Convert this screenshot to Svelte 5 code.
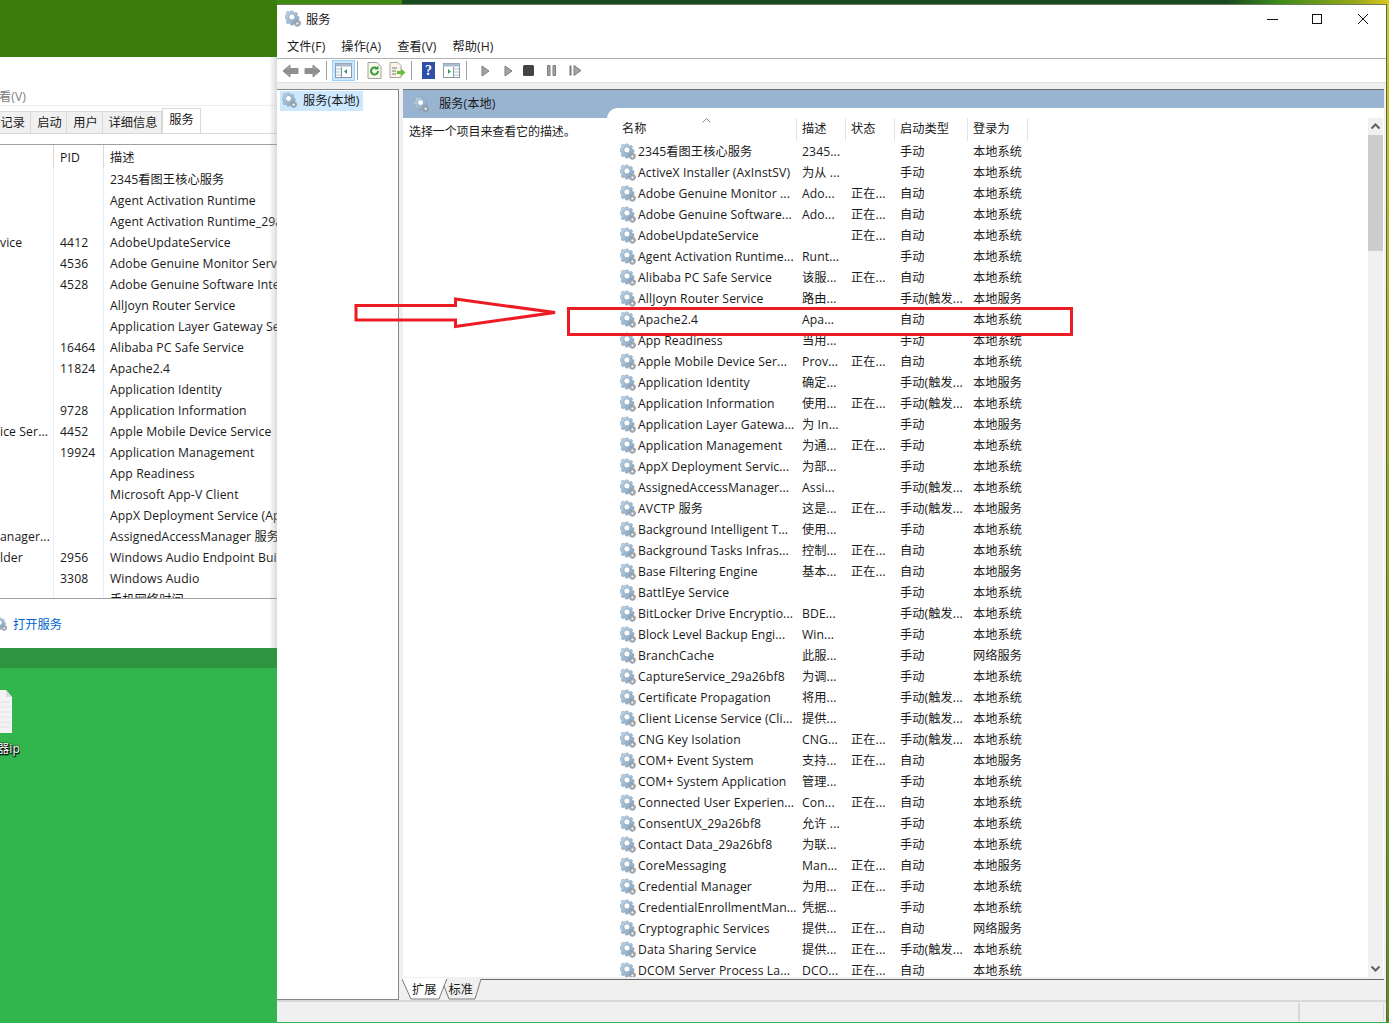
<script>
  const services = `2345看图王核心服务|2345...||手动|本地系统
ActiveX Installer (AxInstSV)|为从 ...||手动|本地系统
Adobe Genuine Monitor ...|Ado...|正在...|自动|本地系统
Adobe Genuine Software...|Ado...|正在...|自动|本地系统
AdobeUpdateService||正在...|自动|本地系统
Agent Activation Runtime...|Runt...||手动|本地系统
Alibaba PC Safe Service|该服...|正在...|自动|本地系统
AllJoyn Router Service|路由...||手动(触发...|本地服务
Apache2.4|Apa...||自动|本地系统
App Readiness|当用...||手动|本地系统
Apple Mobile Device Ser...|Prov...|正在...|自动|本地系统
Application Identity|确定...||手动(触发...|本地服务
Application Information|使用...|正在...|手动(触发...|本地系统
Application Layer Gatewa...|为 In...||手动|本地服务
Application Management|为通...|正在...|手动|本地系统
AppX Deployment Servic...|为部...||手动|本地系统
AssignedAccessManager...|Assi...||手动(触发...|本地系统
AVCTP 服务|这是...|正在...|手动(触发...|本地服务
Background Intelligent T...|使用...||手动|本地系统
Background Tasks Infras...|控制...|正在...|自动|本地系统
Base Filtering Engine|基本...|正在...|自动|本地服务
BattlEye Service|||手动|本地系统
BitLocker Drive Encryptio...|BDE...||手动(触发...|本地系统
Block Level Backup Engi...|Win...||手动|本地系统
BranchCache|此服...||手动|网络服务
CaptureService_29a26bf8|为调...||手动|本地系统
Certificate Propagation|将用...||手动(触发...|本地系统
Client License Service (Cli...|提供...||手动(触发...|本地系统
CNG Key Isolation|CNG...|正在...|手动(触发...|本地系统
COM+ Event System|支持...|正在...|自动|本地服务
COM+ System Application|管理...||手动|本地系统
Connected User Experien...|Con...|正在...|自动|本地系统
ConsentUX_29a26bf8|允许 ...||手动|本地系统
Contact Data_29a26bf8|为联...||手动|本地系统
CoreMessaging|Man...|正在...|自动|本地服务
Credential Manager|为用...|正在...|手动|本地系统
CredentialEnrollmentMan...|凭据...||手动|本地系统
Cryptographic Services|提供...|正在...|自动|网络服务
Data Sharing Service|提供...|正在...|手动(触发...|本地系统
DCOM Server Process La...|DCO...|正在...|自动|本地系统`
    .split('\n')
    .map((l) => l.split('|'));

  const procs = `||2345看图王核心服务
||Agent Activation Runtime
||Agent Activation Runtime_29a26bf8
vice|4412|AdobeUpdateService
|4536|Adobe Genuine Monitor Service
|4528|Adobe Genuine Software Integrity
||AllJoyn Router Service
||Application Layer Gateway Service
|16464|Alibaba PC Safe Service
|11824|Apache2.4
||Application Identity
|9728|Application Information
ice Ser...|4452|Apple Mobile Device Service
|19924|Application Management
||App Readiness
||Microsoft App-V Client
||AppX Deployment Service (AppXSVC)
anager...||AssignedAccessManager 服务
lder|2956|Windows Audio Endpoint Builder
|3308|Windows Audio
||手机网络时间`
    .split('\n')
    .map((l) => l.split('|'));

  const menus = ['文件(F)', '操作(A)', '查看(V)', '帮助(H)'];
  const taskTabs = ['记录', '启动', '用户', '详细信息'];
  const headers = ['名称', '描述', '状态', '启动类型', '登录为'];
</script>

<svg class="defs" width="0" height="0" aria-hidden="true">
  <defs>
    <linearGradient id="gearfill" x1="0" y1="0" x2="1" y2="1">
      <stop offset="0" stop-color="#c4d8ea" />
      <stop offset="1" stop-color="#7f9fbd" />
    </linearGradient>
    <linearGradient id="navfill" x1="0" y1="0" x2="0" y2="1">
      <stop offset="0" stop-color="#b4b4b4" />
      <stop offset=".5" stop-color="#8a8a8a" />
      <stop offset="1" stop-color="#a4a4a4" />
    </linearGradient>
    <symbol id="gear" viewBox="0 0 18 18">
      <path d="M6 1h2.600l.4 1.700 1.200.5 1.500-.9 1.800 1.800-.9 1.500.5 1.200 1.700.4v2.600l-1.700.4-.5 1.200.9 1.500-1.800 1.800-1.500-.9-1.200.5-.4 1.700H6l-.4-1.700-1.200-.5-1.500.9-1.800-1.800.9-1.500-.5-1.200L0 8.600V6l1.500-.4.5-1.200-.9-1.500L2.900 1.100l1.500.9 1.200-.5z" fill="url(#gearfill)" stroke="#7d9ab6" stroke-width=".5" />
      <circle cx="7.300" cy="7.300" r="3.300" fill="#fff" stroke="#7d9ab6" stroke-width=".8" />
      <path d="M12.300 10.500h1.600l.3 1 .8-.5 1.100 1.100-.5.8 1 .3v1.600l-1 .3.5.8-1.100 1.100-.8-.5-.3 1h-1.600l-.3-1-.8.5-1.100-1.100.5-.8-1-.3v-1.600l1-.3-.5-.8 1.100-1.100.8.5z" fill="#a0a8b0" stroke="#7c848c" stroke-width=".4" />
      <circle cx="13.100" cy="14.300" r="1.100" fill="#fff" />
    </symbol>
  </defs>
</svg>

<div class="desktop">
  <div class="topstrip"></div>

  <!-- background window: task manager -->
  <section class="taskman">
    <div class="tm-menu">看(V)</div>
    <div class="tm-tabs">
      {#each taskTabs as t}<span class="tm-tab">{t}</span>{/each}
      <span class="tm-tab active">服务</span>
    </div>
    <div class="tm-table">
      <div class="tm-row tm-head"><span></span><span>PID</span><span>描述</span></div>
      {#each procs as p}
        <div class="tm-row"><span>{p[0]}</span><span>{p[1]}</span><span>{p[2]}</span></div>
      {/each}
    </div>
    <div class="tm-foot">
      <svg class="g14" viewBox="0 0 18 18"><use href="#gear" /></svg>
      <span>打开服务</span>
    </div>
  </section>

  <!-- desktop file icon -->
  <div class="file">
    <svg width="13" height="44" viewBox="0 0 13 44">
      <path d="M-10 0H6l6 7v36H-10z" fill="#f3f3f3" />
      <path d="M6 0v7h6z" fill="#dcdcdc" />
      <path d="M0 12h10M0 17h10M0 22h10M0 27h10M0 32h10M0 37h10" stroke="#e2e2e2" />
    </svg>
    <div class="file-label"><span>服务器ip</span></div>
  </div>

  <!-- main window: services -->
  <main class="services">
    <header class="title">
      <svg class="g17" viewBox="0 0 18 18"><use href="#gear" /></svg>
      <span class="title-text">服务</span>
      <div class="caption">
        <svg viewBox="0 0 12 12" width="12" height="12"><path d="M0 6.500h11" stroke="#111" fill="none" /></svg>
        <svg class="max" viewBox="0 0 12 12" width="12" height="12"><rect x="1.500" y="1.500" width="9" height="9" fill="none" stroke="#111" /></svg>
        <svg viewBox="0 0 12 12" width="12" height="12"><path d="M1 1l10 10M11 1L1 11" stroke="#111" fill="none" /></svg>
      </div>
    </header>
    <nav class="menu">
      {#each menus as m}<span>{m}</span>{/each}
    </nav>
    <div class="toolbar">
      <svg class="tb nav" width="17" height="14" viewBox="0 0 17 14"><path d="M1 7l7-6v3.500h8v5H8V13z" fill="url(#navfill)" stroke="#8c8c8c" /></svg>
      <svg class="tb nav" width="17" height="14" viewBox="0 0 17 14"><path d="M16 7L9 1v3.500H1v5h8V13z" fill="url(#navfill)" stroke="#8c8c8c" /></svg>
      <i class="sep"></i>
      <span class="tb-active">
        <svg width="17" height="15" viewBox="0 0 17 15"><rect x=".5" y=".5" width="16" height="14" fill="#fff" stroke="#8a98a6" /><rect x=".5" y=".5" width="16" height="3" fill="#a9bccd" /><path d="M1 6h5M1 9h5M1 12h5" stroke="#a9bccd" /><path d="M6.500 4v10" stroke="#8a98a6" /><path d="M12 6v5L9 8.500z" fill="#2f9e57" /></svg>
      </span>
      <i class="sep"></i>
      <svg class="tb refresh" width="15" height="17" viewBox="0 0 15 17"><path d="M1 .5h9l4 4v12H1z" fill="#fbf7e6" stroke="#a0a0a0" /><path d="M11 9a3.500 3.500 0 1 1-1.200-2.600" fill="none" stroke="#2f9e3f" stroke-width="2" /><path d="M11.500 3.500v4h-4z" fill="#2f9e3f" /></svg>
      <svg class="tb export" width="17" height="17" viewBox="0 0 17 17"><path d="M1 .5h8l3 3v12H1z" fill="#fbf7e6" stroke="#a8a8a0" /><path d="M3 6h5M3 9h4M3 12h4" stroke="#777" /><path d="M8 9h4V6.500l4.500 4-4.500 4V12H8z" fill="#6dbb3c" /></svg>
      <i class="sep"></i>
      <span class="help">?</span>
      <svg class="tb prop" width="17" height="15" viewBox="0 0 17 15"><rect x=".5" y=".5" width="16" height="14" fill="#fff" stroke="#8a98a6" /><rect x=".5" y=".5" width="16" height="3" fill="#a9bccd" /><path d="M10.500 4v10" stroke="#8a98a6" /><path d="M11 6h5M11 9h5M11 12h5" stroke="#a9bccd" /><path d="M5 6v5l3-2.500z" fill="#2f9e57" /></svg>
      <i class="sep"></i>
      <svg class="ctl play1" width="9" height="12" viewBox="0 0 9 12"><path d="M1 1l7 5-7 5z" fill="#a4a4a4" stroke="#7c7c7c" /></svg>
      <svg class="ctl play2" width="9" height="12" viewBox="0 0 9 12"><path d="M1 1l7 5-7 5z" fill="#a4a4a4" stroke="#7c7c7c" /></svg>
      <svg class="ctl stop" width="11" height="11" viewBox="0 0 11 11"><rect width="11" height="11" rx="1.500" fill="#444" /></svg>
      <svg class="ctl pause" width="9" height="11" viewBox="0 0 9 11"><path d="M.5.500h2.500v10H.5zM6 .5h2.500v10H6z" fill="#a4a4a4" stroke="#7c7c7c" /></svg>
      <svg class="ctl resume" width="13" height="11" viewBox="0 0 13 11"><path d="M.5.500h2v10h-2z" fill="#777" /><path d="M5 .5l7 5-7 5z" fill="#a4a4a4" stroke="#7c7c7c" /></svg>
    </div>

    <div class="panes">
      <aside class="tree">
        <div class="tree-item">
          <svg class="g16" viewBox="0 0 18 18"><use href="#gear" /></svg>
          <span>服务(本地)</span>
        </div>
      </aside>

      <div class="content">
        <div class="banner">
          <svg class="g16" viewBox="0 0 18 18"><use href="#gear" /></svg>
          <span>服务(本地)</span>
        </div>
        <div class="body">
          <div class="desc">选择一个项目来查看它的描述。</div>
          <div class="list">
            <div class="table">
              <div class="thead">
                {#each headers as h, i}
                  <span class="th" class:first={i === 0}>{h}{#if i === 0}<svg class="caret" width="9" height="5" viewBox="0 0 9 5"><path d="M.5 4.500l4-4 4 4" fill="none" stroke="#888" /></svg>{/if}</span>
                {/each}
              </div>
              <div class="tbody">
                {#each services as s}
                  <div class="tr">
                    <svg class="g17" viewBox="0 0 18 18"><use href="#gear" /></svg>
                    <span>{s[0]}</span><span>{s[1]}</span><span>{s[2]}</span><span>{s[3]}</span><span>{s[4]}</span>
                  </div>
                {/each}
              </div>
            </div>
            <div class="scrollbar">
              <svg class="sb-btn" width="15" height="17" viewBox="0 0 15 17"><path d="M3.500 10.500l4-4 4 4" fill="none" stroke="#606060" stroke-width="2" /></svg>
              <div class="sb-thumb"></div>
              <div class="sb-track"></div>
              <svg class="sb-btn" width="15" height="17" viewBox="0 0 15 17"><path d="M3.500 6.500l4 4 4-4" fill="none" stroke="#606060" stroke-width="2" /></svg>
            </div>
          </div>
        </div>
        <div class="tabs">
          <svg class="tab-art" width="80" height="23" viewBox="0 0 80 23" aria-hidden="true">
            <path d="M0 0L9 21H37L42 8L45 0z" fill="#fff" />
            <path d="M45 0H79V2L73 21H47L42 8z" fill="#f0f0f0" />
            <path d="M0 1L9 21H37L42 8M42 8L47 21H73L79 1" fill="none" stroke="#7a7a7a" />
            <path d="M42 8L45 1" stroke="#7a7a7a" fill="none" />
          </svg>
          <span class="tab first">扩展</span>
          <span class="tab">标准</span>
        </div>
      </div>
    </div>

    <footer class="status">
      <span class="st-a"></span>
    </footer>
  </main>

  <!-- annotation overlay -->
  <svg class="arrow" width="210" height="36" viewBox="0 0 210 36">
    <path d="M2 8.500h99.500V2L201 15.500 101.500 29.500v-6.500H2z" fill="none" stroke="#ed1c24" stroke-width="3" />
  </svg>
  <div class="redbox"></div>
</div>

<style>
  :global(body) {
    margin: 0;
  }
  .defs {
    position: absolute;
  }
  .desktop {
    position: relative;
    width: 1389px;
    height: 1023px;
    overflow: hidden;
    font-family: 'Open Sans', 'Noto Sans CJK SC', sans-serif;
    font-size: 12.200px;
    letter-spacing: 0.1px;
    color: #1a1a1a;
    background: linear-gradient(#3c7c0a 0 57px, #2f9340 57px 668px, #33b54e 668px);
  }
  .topstrip {
    position: absolute;
    left: 277px;
    right: 0;
    top: 0;
    height: 5px;
    background: linear-gradient(90deg, #3f8a10 0 125px, #1a4a22 125px 950px, #3c8a1a 1000px, #9aa81a 1080px, #dcc81e);
  }
  .desktop::after {
    content: '';
    position: absolute;
    right: 0;
    top: 0;
    bottom: 0;
    width: 2px;
    background: linear-gradient(#d8c81e, #a9ac18 40%, #7f9a16 75%, #5a8a20);
  }

  /* task manager */
  .taskman {
    position: absolute;
    left: 0;
    top: 57px;
    width: 277px;
    height: 591px;
    background: #fff;
    display: flex;
    flex-direction: column;
    overflow: hidden;
  }
  .taskman::after {
    content: '';
    position: absolute;
    top: 0;
    right: 0;
    bottom: 0;
    width: 8px;
    background: linear-gradient(90deg, rgba(150, 150, 150, 0), rgba(150, 150, 150, 0.35));
  }
  .tm-menu {
    height: 49px;
    box-sizing: border-box;
    padding-top: 31px;
    margin-left: -1px;
    color: #808080;
    border-bottom: 1px solid #efefef;
    line-height: 17px;
  }
  .tm-tabs {
    height: 28px;
    box-sizing: border-box;
    padding-top: 5px;
    display: flex;
    border-bottom: 1px solid #d9d9d9;
    margin-bottom: 10px;
    flex: none;
  }
  .tm-tab {
    width: 36px;
    height: 22px;
    box-sizing: border-box;
    text-align: center;
    line-height: 22px;
    padding-left: 2px;
    background: #f0f0f0;
    border-right: 1px solid #d9d9d9;
    border-top: 1px solid #d9d9d9;
    white-space: nowrap;
    flex: none;
  }
  .tm-tab:first-child {
    width: 31px;
    text-align: right;
    padding-left: 0;
    padding-right: 5px;
  }
  .tm-tab:nth-child(4) {
    width: 59px;
  }
  .tm-tab.active {
    position: relative;
    background: #fff;
    width: 39px;
    height: 25px;
    margin-top: -3px;
    padding-left: 0;
    border: 1px solid #d9d9d9;
    border-bottom: 0;
    line-height: 21px;
  }
  .tm-table {
    flex: 1;
    min-height: 0;
    overflow: hidden;
    border-top: 1px solid #a0a0a0;
    border-bottom: 1px solid #a0a0a0;
  }
  .tm-row {
    display: grid;
    grid-template-columns: 54px 50px 1fr;
    height: 21px;
    line-height: 21px;
    white-space: nowrap;
  }
  .tm-head {
    height: 24px;
    line-height: 25px;
  }
  .tm-row span {
    overflow: hidden;
    box-sizing: border-box;
    padding-left: 6px;
    border-right: 1px solid #e5eef8;
  }
  .tm-row span:first-child {
    padding-left: 0;
  }
  .tm-row span:last-child {
    border: 0;
    overflow: visible;
  }
  .tm-head span {
    border-right-color: #d9d9d9;
  }
  .tm-foot {
    height: 49px;
    display: flex;
    align-items: center;
    gap: 5px;
    margin-left: -6px;
    color: #0066cc;
    flex: none;
  }
  .g14 {
    width: 14px;
    height: 14px;
  }
  .g16 {
    width: 16px;
    height: 16px;
    flex: none;
  }
  .g17 {
    width: 17px;
    height: 17px;
    flex: none;
  }

  .file {
    position: absolute;
    left: 0;
    top: 690px;
    width: 20px;
  }
  .file svg {
    display: block;
  }
  .file-label {
    margin-top: 7px;
    white-space: nowrap;
    overflow: hidden;
    color: #fff;
    line-height: 16px;
    height: 19px;
    text-shadow: 1px 1px 1px #000, 0 0 2px #000, 0 1px 2px #000;
    display: flex;
    justify-content: flex-end;
  }
  .file-label span {
    flex: none;
  }

  /* services window */
  .services {
    position: absolute;
    left: 277px;
    top: 4px;
    width: 1110px;
    height: 1018px;
    box-sizing: border-box;
    border-right: 1px solid #5a6a3a;
    border-top: 1px solid #6a7a5a;
    background: #f0f0f0;
    display: flex;
    flex-direction: column;
  }
  .title {
    height: 29px;
    box-sizing: border-box;
    padding-bottom: 2px;
    background: #fff;
    display: flex;
    align-items: center;
    padding-left: 8px;
    gap: 4px;
    flex: none;
  }
  .caption {
    margin-left: auto;
    display: flex;
    align-items: center;
    padding-right: 17px;
    gap: 33px;
  }
  .caption svg {
    display: block;
  }
  .caption .max {
    margin-left: -1px;
    margin-right: 1px;
  }
  .menu {
    height: 24px;
    background: #fff;
    display: flex;
    align-items: center;
    padding-left: 10px;
    gap: 16px;
    border-bottom: 1px solid #b0b0b0;
    flex: none;
  }
  .toolbar {
    height: 23px;
    background: #fff;
    display: flex;
    align-items: center;
    padding-left: 5px;
    flex: none;
    border-bottom: 1px solid #e0e0e0;
  }
  .tb {
    flex: none;
    margin-right: 5px;
  }
  .refresh {
    margin-right: 7px;
  }
  .export {
    margin-right: 5px;
  }
  .prop {
    margin-right: 6px;
  }
  .ctl {
    flex: none;
  }
  .play1 {
    margin-left: 9px;
  }
  .play2 {
    margin-left: 14px;
  }
  .stop {
    margin-left: 10px;
  }
  .pause {
    margin-left: 13px;
  }
  .resume {
    margin-left: 13px;
  }
  .sep {
    width: 1px;
    height: 19px;
    background: #a0a0a0;
    margin: 0 5px 0 0;
    flex: none;
  }
  .tb-active {
    width: 23px;
    height: 21px;
    box-sizing: border-box;
    background: #cce8ff;
    border: 1px solid #99d1ff;
    display: flex;
    align-items: center;
    justify-content: center;
    margin-right: 2px;
  }
  .toolbar .tb-active + .sep {
    margin-right: 9px;
  }
  .help {
    width: 13px;
    height: 17px;
    background: #2f4fa8;
    color: #fff;
    font: bold 14px/17px 'Liberation Serif', serif;
    text-align: center;
    margin: 0 8px 0 5px;
    flex: none;
  }
  .panes {
    flex: 1;
    min-height: 0;
    display: flex;
    padding-top: 6px;
    gap: 4px;
  }
  .tree {
    width: 122px;
    box-sizing: border-box;
    background: #fff;
    border: 1px solid #82878c;
    border-left: 0;
    padding: 1px 0 0 3px;
    flex: none;
  }
  .tree-item {
    width: 83px;
    height: 20px;
    box-sizing: border-box;
    background: #cce8ff;
    display: flex;
    align-items: center;
    gap: 5px;
    padding-left: 2px;
    padding-bottom: 2px;
    white-space: nowrap;
  }
  .content {
    flex: 1;
    min-width: 0;
    display: flex;
    flex-direction: column;
    position: relative;
    border-top: 1px solid #6d6d6d;
    margin-right: 2px;
  }
  .banner {
    height: 28px;
    background: #99b4d1;
    display: flex;
    align-items: flex-start;
    padding: 6px 0 0 11px;
    box-sizing: border-box;
    gap: 9px;
    line-height: 16px;
    flex: none;
  }
  .body {
    flex: 1;
    min-height: 0;
    display: flex;
    background: #fff;
    border-bottom: 2px solid #f0f0f0;
  }
  .desc {
    width: 204px;
    padding: 5px 0 0 6px;
    box-sizing: border-box;
    line-height: 17px;
    flex: none;
    letter-spacing: -0.1px;
    font-size: 12px;
  }
  .list {
    flex: 1;
    min-width: 0;
    background: #fff;
    margin-top: -10px;
    border-top-left-radius: 11px;
    display: flex;
    padding-left: 13px;
    position: relative;
  }
  .table {
    flex: 1;
    min-width: 0;
    overflow: hidden;
    padding-top: 10px;
    display: flex;
    flex-direction: column;
  }
  .thead {
    display: grid;
    grid-template-columns: 190px 49px 49px 73px 60px;
    height: 23px;
    margin-left: -13px;
    flex: none;
  }
  .th {
    position: relative;
    box-sizing: border-box;
    border-right: 1px solid #e4e4e4;
    padding-left: 5px;
    line-height: 22px;
  }
  .th.first {
    padding-left: 15px;
  }
  .caret {
    position: absolute;
    left: 95px;
    top: 0;
  }
  .tbody {
    flex: 1;
    min-height: 0;
    overflow: hidden;
  }
  .tr {
    display: grid;
    grid-template-columns: 18px 164px 49px 49px 73px 60px;
    height: 21px;
    line-height: 21px;
    align-items: center;
    white-space: nowrap;
  }
  .scrollbar {
    width: 15px;
    margin-top: 10px;
    margin-right: 1px;
    background: #f0f0f0;
    display: flex;
    flex-direction: column;
    flex: none;
  }
  .sb-btn {
    flex: none;
    display: block;
  }
  .sb-thumb {
    height: 116px;
    background: #cdcdcd;
    flex: none;
  }
  .sb-track {
    flex: 1;
  }
  .tabs {
    position: relative;
    height: 21px;
    box-sizing: border-box;
    border-top: 1px solid #696969;
    background: #f0f0f0;
    display: flex;
    flex: none;
    line-height: 19px;
  }
  .tab-art {
    position: absolute;
    left: -1px;
    top: -2px;
  }
  .tab {
    position: relative;
    margin-left: 9px;
  }
  .tab + .tab {
    margin-left: 12px;
  }
  .status {
    height: 22px;
    box-sizing: border-box;
    border-top: 2px solid #d8d8d8;
    display: flex;
    flex: none;
    justify-content: flex-end;
    padding-top: 1px;
  }
  .st-a {
    width: 86px;
    height: 18px;
    box-sizing: border-box;
    border-left: 2px solid #d8d8d8;
    border-right: 1px solid #d8d8d8;
    margin-right: 2px;
  }

  /* annotation */
  .arrow {
    position: absolute;
    left: 354px;
    top: 297px;
  }
  .redbox {
    position: absolute;
    left: 567px;
    top: 307px;
    width: 506px;
    height: 29px;
    box-sizing: border-box;
    border: 3px solid #ed1c24;
    pointer-events: none;
  }
</style>
